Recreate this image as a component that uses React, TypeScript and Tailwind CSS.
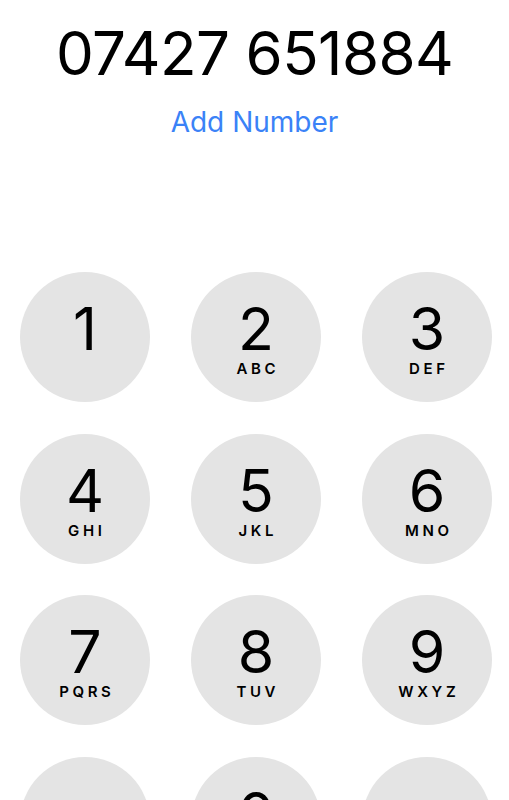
const keys = [
  { d: '1', l: '' },
  { d: '2', l: 'ABC' },
  { d: '3', l: 'DEF' },
  { d: '4', l: 'GHI' },
  { d: '5', l: 'JKL' },
  { d: '6', l: 'MNO' },
  { d: '7', l: 'PQRS' },
  { d: '8', l: 'TUV' },
  { d: '9', l: 'WXYZ' },
  { d: '*', l: '' },
  { d: '0', l: '+' },
  { d: '#', l: '' },
]

const Key = ({ d, l }: { d: string; l: string }) => {
  const low = d === '*' || d === '#'
  return (
    <div className={`w-[130px] h-[130px] rounded-full bg-[#e4e4e4] flex flex-col items-center ${low ? 'pt-[40px]' : 'pt-[27px]'}`}>
      <span className="text-[59px] leading-none font-normal text-black">{d}</span>
      <span className="mt-[3px] h-[14px] text-[15px] leading-none font-semibold tracking-[0.24em] pl-[0.24em] text-black">{l}</span>
    </div>
  )
}

const App = () => {
  return (
    <div className="w-[509px] h-[800px] overflow-hidden bg-white font-['Inter',sans-serif]">
      <div className="flex flex-col items-center pt-[23px]">
        <h1 className="text-[60px] leading-none font-normal text-black tracking-[-0.01em]">07427 651884</h1>
        <button className="mt-[25px] text-[28px] leading-none text-[#3a82f7]">Add Number</button>
      </div>
      <div className="grid grid-cols-[repeat(3,130px)] gap-x-[41px] gap-y-[31.5px] pl-[20px] mt-[136px]">
        {keys.map((k) => (
          <Key key={k.d} d={k.d} l={k.l} />
        ))}
      </div>
    </div>
  )
}

export default App
